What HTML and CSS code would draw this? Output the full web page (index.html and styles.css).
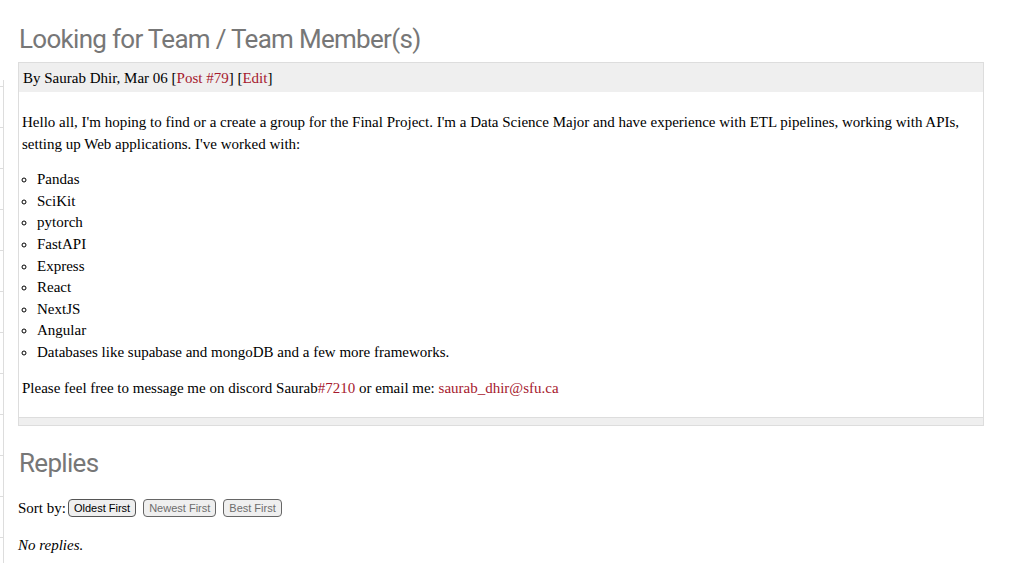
FILE: index.html
```html
<!DOCTYPE html>
<html>
<head>
<meta charset="utf-8">
<link rel="stylesheet" href="styles.css">
</head>
<body>
<div class="page">
  <div class="sidebar">
    <div class="row first"></div>
    <div class="row"></div><div class="row"></div><div class="row"></div>
    <div class="row"></div><div class="row"></div><div class="row"></div>
    <div class="row"></div><div class="row"></div><div class="row"></div>
    <div class="row"></div><div class="row"></div><div class="row"></div>
  </div>
  <main class="main">
    <h1 class="title">Looking for Team / Team Member(s)</h1>
    <div class="post">
      <div class="post-head">By Saurab Dhir, Mar 06 [<a href="#">Post #79</a>] [<a href="#">Edit</a>]</div>
      <div class="post-body">
        <p>Hello all, I'm hoping to find or a create a group for the Final Project. I'm a Data Science Major and have experience with ETL pipelines, working with APIs, setting up Web applications. I've worked with:</p>
        <ul>
          <li>Pandas</li>
          <li>SciKit</li>
          <li>pytorch</li>
          <li>FastAPI</li>
          <li>Express</li>
          <li>React</li>
          <li>NextJS</li>
          <li>Angular</li>
          <li>Databases like supabase and mongoDB and a few more frameworks.</li>
        </ul>
        <p>Please feel free to message me on discord Saurab<a href="#">#7210</a> or email me: <a href="#">saurab_dhir@sfu.ca</a></p>
      </div>
      <div class="post-foot"></div>
    </div>
    <h2 class="title replies">Replies</h2>
    <div class="sort">Sort by: <button class="btn">Oldest First</button><button class="btn off">Newest First</button><button class="btn off">Best First</button></div>
    <p class="none">No replies.</p>
  </main>
</div>
</body>
</html>
```
FILE: styles.css
```css
html, body { margin: 0; padding: 0; background: #fff; }
body { font-family: "Liberation Serif", "DejaVu Serif", serif; font-size: 15px; color: #000; }
.page { display: flex; align-items: flex-start; }
.sidebar { width: 3px; margin-top: 80px; border-right: 1px solid #ddd; }
.sidebar .row { height: 40px; border-bottom: 1px solid #ddd; }
.sidebar .row.first { height: 6px; }
.main { margin-left: 14px; width: 966px; }
.title { font-family: Roboto, "Open Sans", sans-serif; font-weight: 400; font-size: 26px; color: #777; margin: 24px 0 8px 1px; line-height: 30px; letter-spacing: -0.7px; }
.post { border: 1px solid #ddd; }
.post-head { background: #efefef; height: 29px; line-height: 31px; padding: 0 4px; font-size: 15px; }
a { color: #a6192e; text-decoration: none; }
.post-body { padding: 20px 3px 18px 3px; line-height: 21.6px; }
.post-body p { margin: 0 0 14px 0; }
.post-body p:last-child { margin-bottom: 0; }
.post-body ul { margin: 0 0 14px 0; padding-left: 15px; list-style: circle; }
.post-foot { height: 7px; background: #efefef; border-top: 1px solid #ddd; }
.replies { margin-top: 22px; margin-bottom: 21px; }
.sort { display: flex; align-items: center; gap: 7px; }
.btn { font-family: "Liberation Sans", Arial, sans-serif; font-size: 11px; background: #efefef; border: 1px solid #555; border-radius: 4px; padding: 2px 5px; color: #000; margin: 0; }
.sort .btn:nth-of-type(1) { margin-left: -5px; }
.btn.off { color: #6d6d6d; border-color: #666; }
.none { font-style: italic; margin: 20px 0 0 0; }
```
